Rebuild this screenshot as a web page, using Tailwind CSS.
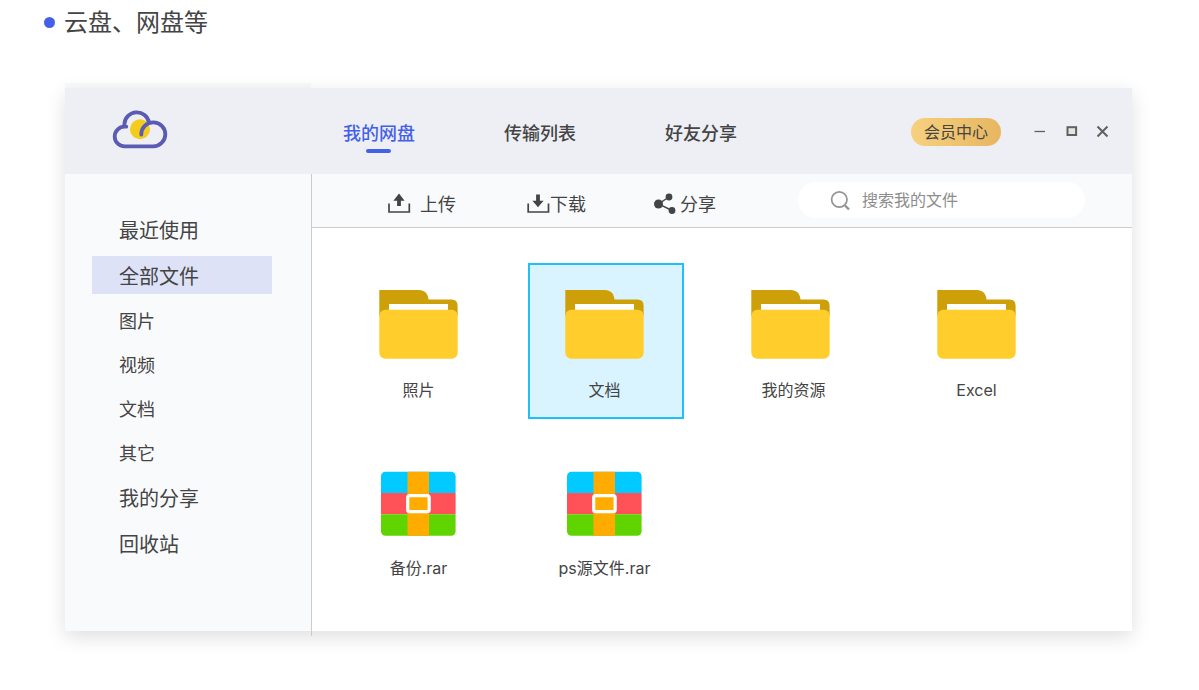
<!DOCTYPE html>
<html lang="zh-CN">
<head>
<meta charset="utf-8">
<title>网盘</title>
<script src="https://cdn.jsdelivr.net/npm/@tailwindcss/browser@4"></script>
</head>
<body class="h-[690px] w-[1199px] overflow-hidden bg-white font-['Inter','Noto_Sans_CJK_SC',sans-serif] text-[#444]">
<svg class="absolute size-0">
  <symbol id="folder" viewBox="0 0 80 70">
    <path fill="#cda009" d="M.3 1H40C45.500 1 49 4.500 49.500 10.500H72.500Q78.600 10.500 78.600 16.500V27H.3Z"/>
    <path fill="#fff" d="M10 15H69V30H10Z"/>
    <rect x=".3" y="20.800" width="78.400" height="49" rx="6" fill="#ffcd2c"/>
  </symbol>
  <symbol id="rar" viewBox="0 0 75 65">
    <clipPath id="rarclip"><rect x="0" y=".8" width="74.600" height="64" rx="4.500"/></clipPath>
    <g clip-path="url(#rarclip)">
      <path fill="#00caff" d="M0 0H75V22H0Z"/>
      <path fill="#ff5157" d="M0 22H75V43.300H0Z"/>
      <path fill="#5fd400" d="M0 43.300H75V65H0Z"/>
      <path fill="#ffab00" d="M26.500 0H48V65H26.500Z"/>
    </g>
    <rect x="26.700" y="24.700" width="21.500" height="16" rx="2" fill="#ffab00" stroke="#fff" stroke-width="3.200"/>
  </symbol>
</svg>
<h1 class="flex h-[83px] items-start pl-11 pt-[5px] text-2xl leading-9 font-normal">
  <span class="mt-3 mr-[9px] size-[11px] rounded-full bg-[#4560e8]"></span>云盘、网盘等
</h1>
<main class="ml-[65px] w-[1067px]">
  <div class="h-[5px] w-[246px] bg-[#f9fafc]"></div>
  <div class="h-[543px] rounded-b-xs shadow-[0_6px_20px_rgba(0,0,0,0.13)]">
    <header class="flex h-[86px] items-start bg-[#edeff5]">
      <svg class="mt-[21px] ml-[47px] h-10 w-14 shrink-0" viewBox="0 0 56 40" fill="none" stroke="#5a5bb3" stroke-width="3.800">
        <circle cx="28" cy="20.300" r="10" fill="#f5cb1c" stroke="none"/>
        <path d="M14.300 17.700H12.500A9.600 9.600 0 0 0 12.500 37.300H41A12 12 0 1 0 29.300 25.500" stroke-linecap="round"/>
        <path d="M12.400 19V15A12.400 12.400 0 0 1 37 13.700"/>
      </svg>
      <nav class="ml-[175px] flex gap-[89px] pt-8 text-lg leading-7 font-medium">
        <a class="flex w-[72px] flex-col items-center text-[#4560e8]">我的网盘<span class="mt-px mr-[2px] h-1 w-[25px] rounded-full bg-[#4560e8]"></span></a>
        <a class="w-[72px]">传输列表</a>
        <a class="w-[72px]">好友分享</a>
      </nav>
      <a class="mt-[30px] ml-[174px] flex h-7 w-[90px] items-center justify-center rounded-full bg-linear-to-r from-[#f6d17f] to-[#e7b660] text-base">会员中心</a>
      <svg class="mt-[37px] ml-[33px] h-3.5 w-[76px]" viewBox="0 0 76 14" fill="none" stroke="#606060">
        <path d="M.5 6.500H11" stroke-width="1.300"/>
        <rect x="33.500" y="2.200" width="8.600" height="7.800" stroke-width="2" fill="#e4e4e4"/>
        <path d="M63.500 1.500L73.500 11.500M73.500 1.500L63.500 11.500" stroke-width="2"/>
      </svg>
    </header>
    <div class="flex h-[457px]">
      <aside class="h-[457px] w-[246px] shrink-0 rounded-bl-xs bg-[#f9fafc] pt-[30px] pl-[27px] text-xl *:flex *:w-[180px] *:items-center *:pt-0.5 *:pl-[27px]">
        <div class="h-[52px]">最近使用</div>
        <div class="mb-[5px] h-[38px] bg-[#dde2f6]"><span class="pt-0.5">全部文件</span></div>
        <div class="h-11 text-lg">图片</div>
        <div class="h-11 text-lg">视频</div>
        <div class="h-11 text-lg">文档</div>
        <div class="h-11 text-lg">其它</div>
        <div class="h-[46px]">我的分享</div>
        <div class="h-[46px]">回收站</div>
      </aside>
      <div class="h-[462px] w-px shrink-0 bg-[#ccc]"></div>
      <section class="w-[820px] bg-white">
        <div class="flex h-[54px] items-start border-b border-[#ccc] bg-[#f9fafc] text-lg leading-7">
          <div class="mt-[17px] ml-[75px] flex w-[140px] gap-[9px]">
            <svg class="mt-px size-6" viewBox="0 0 24 24" fill="none" stroke="#444" stroke-width="1.700"><path d="M2 11.500V20H22.300V11.500"/><path d="M12 1.500L17.600 8.700H13.900V14H10.100V8.700H6.400Z" fill="#444" stroke="none"/></svg>上传
          </div>
          <div class="mt-[17px] flex w-[126px]">
            <svg class="mt-px -mr-px size-6" viewBox="0 0 24 24" fill="none" stroke="#444" stroke-width="1.700"><path d="M1.200 11.500V20H21.500V11.500"/><path d="M11 15.200L16.600 8.800H12.900V2.500H9.100V8.800H5.400Z" fill="#444" stroke="none"/></svg>下载
          </div>
          <div class="mt-[17px] flex w-[145px] gap-[3px]">
            <svg class="mt-px size-6" viewBox="0 0 24 24" fill="#444"><path d="M16 5L5.500 12L19 18.500" fill="none" stroke="#444" stroke-width="1.400"/><circle cx="5.500" cy="12" r="4.500"/><circle cx="16" cy="5" r="3.400"/><circle cx="19" cy="18.500" r="3.400"/></svg>分享
          </div>
          <div class="mt-2 flex h-9 w-[287px] items-center rounded-full bg-white pl-[32px] text-base text-[#8d8d8d]">
            <svg class="mr-[11px] size-[21px]" viewBox="0 0 21 21" fill="none" stroke="#949494"><circle cx="9.300" cy="9.500" r="7.700" stroke-width="1.700"/><path d="M15 15.500L19 19.500" stroke-width="2.400"/></svg>搜索我的文件
          </div>
        </div>
        <div class="grid grid-cols-[repeat(4,156px)] gap-x-[30px] gap-y-[22px] pt-[35px] pl-[30px] text-base leading-6 *:flex *:h-[156px] *:flex-col *:items-center *:pr-[3px]">
          <div><svg class="mt-[26px] mb-[19px] h-[70px] w-20 shrink-0"><use href="#folder"/></svg>照片</div>
          <div class="bg-[#daf4ff] outline-2 -outline-offset-2 outline-[#1fc0fa]"><svg class="mt-[26px] mb-[19px] h-[70px] w-20 shrink-0"><use href="#folder"/></svg>文档</div>
          <div><svg class="mt-[26px] mb-[19px] h-[70px] w-20 shrink-0"><use href="#folder"/></svg><span class="pl-[6px]">我的资源</span></div>
          <div><svg class="mt-[26px] mb-[19px] h-[70px] w-20 shrink-0"><use href="#folder"/></svg>Excel</div>
          <div><svg class="mt-[30px] mb-5 h-[65px] w-[75px] shrink-0"><use href="#rar"/></svg>备份.rar</div>
          <div><svg class="mt-[30px] mb-5 h-[65px] w-[75px] shrink-0"><use href="#rar"/></svg>ps源文件.rar</div>
        </div>
      </section>
    </div>
  </div>
</main>
</body>
</html>
